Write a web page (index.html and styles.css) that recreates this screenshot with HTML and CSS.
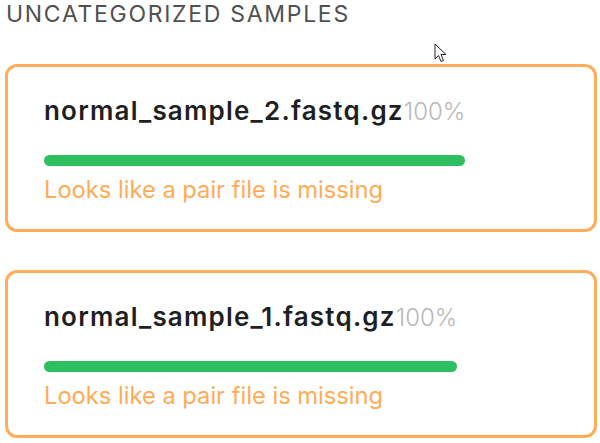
FILE: index.html
```html
<!DOCTYPE html>
<html>
<head>
<meta charset="utf-8">
<link rel="stylesheet" href="styles.css">
</head>
<body>
<div class="page">
  <h2 class="section-title">UNCATEGORIZED SAMPLES</h2>
  <div class="list">
    <div class="card">
      <div class="progress">
        <div class="head"><span class="name">normal_sample_2.fastq.gz</span><span class="pct">100%</span></div>
        <div class="bar"></div>
      </div>
      <div class="warn">Looks like a pair file is missing</div>
    </div>
    <div class="card">
      <div class="progress">
        <div class="head"><span class="name">normal_sample_1.fastq.gz</span><span class="pct">100%</span></div>
        <div class="bar"></div>
      </div>
      <div class="warn">Looks like a pair file is missing</div>
    </div>
  </div>
  <svg class="cursor" width="14" height="20" viewBox="0 0 14 20"><path d="M1 1 L1 16 L4.5 12.5 L7 18.5 L9.5 17.5 L7 11.5 L12 11.5 Z" fill="#fff" stroke="#222" stroke-width="1" stroke-linejoin="round"/></svg>
</div>
</body>
</html>
```
FILE: styles.css
```css
html, body {
  margin: 0;
  padding: 0;
  background: #fff;
}
body {
  font-family: Inter, "Noto Sans", sans-serif;
}
.page {
  position: relative;
  padding: 0 3px 0 5px;
}
.section-title {
  margin: 0;
  font-size: 23px;
  font-weight: 400;
  letter-spacing: 1.7px;
  line-height: 28px;
  color: #505050;
  padding-left: 1px;
}
.list {
  display: flex;
  flex-direction: column;
  gap: 38px;
  margin-top: 36px;
}
.card {
  border: 3px solid #ffad5a;
  border-radius: 12px;
  padding: 28px 36px 25px;
  display: flex;
  flex-direction: column;
  align-items: flex-start;
}
.progress {
  display: inline-flex;
  flex-direction: column;
}
.head {
  font-size: 26px;
  line-height: 32px;
  white-space: nowrap;
}
.name {
  font-weight: 600;
  letter-spacing: 1.2px;
  color: #1f1f1f;
}
.pct {
  font-weight: 300;
  font-size: 24px;
  color: #b8b8b8;
}
.bar {
  margin-top: 27px;
  height: 11px;
  border-radius: 6px;
  background: #2dbf60;
}
.warn {
  margin-top: 10px;
  font-size: 23.7px;
  line-height: 28px;
  color: #ffab57;
}
.cursor {
  position: absolute;
  left: 434px;
  top: 43px;
}
```
